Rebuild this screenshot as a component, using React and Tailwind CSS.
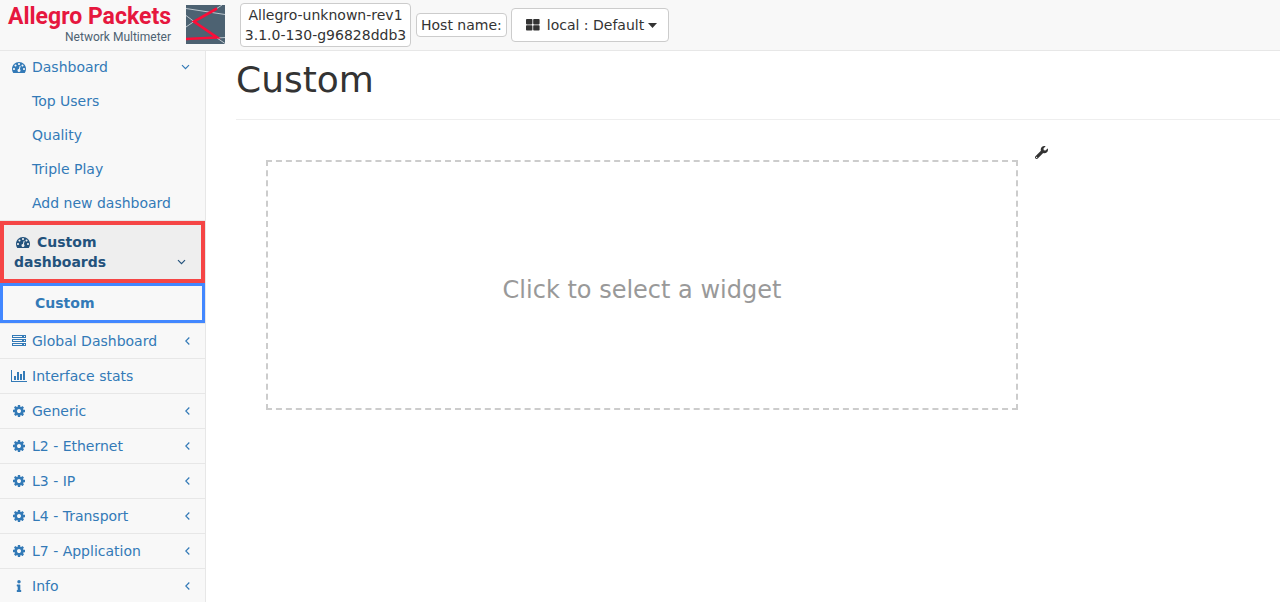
import React, { useState } from 'react';
import { FaInfo, FaWrench } from 'react-icons/fa';

const ServerIcon = () => (
  <svg width="14" height="12" viewBox="0 0 14 12" fill="currentColor">
    <path
      fillRule="evenodd"
      d="M0 0h14v3H0zM1 1v1h9V1zM12 1v1h1V1zM0 4h14v3H0zM1 5v1h9V5zM12 5v1h1V5zM0 8h14v3H0zM1 9v1h9V9zM12 9v1h1V9z"
    />
  </svg>
);

const BarChartIcon = () => (
  <svg width="16" height="12" viewBox="0 0 16 12" fill="currentColor">
    <path d="M0 0h1v11h15v1H0zM3 6h2v4H3zM6 2h2v8H6zM9 4h2v6H9zM12 1h2v9h-2z" />
  </svg>
);

const GaugeIcon = ({ className }) => (
  <svg width="14" height="14" viewBox="0 0 1792 1792" fill="currentColor" className={className}>
    <path d="M384 1152q0-53-37.500-90.500t-90.500-37.500-90.500 37.500-37.500 90.500 37.500 90.500 90.500 37.500 90.500-37.500 37.500-90.500zm192-448q0-53-37.500-90.500t-90.500-37.500-90.500 37.500-37.500 90.500 37.500 90.500 90.500 37.500 90.500-37.500 37.500-90.500zm428 481l101-382q6-26-7.500-48.500t-38.500-29.500-48 6.500-30 39.500l-101 382q-60 5-107 43.500t-63 98.500q-20 77 20 146t117 89 146-20 89-117q16-60-6-117t-72-91zm660-33q0-53-37.500-90.500t-90.500-37.500-90.500 37.500-37.500 90.500 37.500 90.500 90.500 37.500 90.500-37.500 37.500-90.500zm-640-640q0-53-37.500-90.500t-90.500-37.500-90.500 37.500-37.500 90.500 37.500 90.500 90.500 37.500 90.500-37.500 37.500-90.500zm448 192q0-53-37.500-90.500t-90.500-37.500-90.500 37.500-37.500 90.500 37.500 90.500 90.500 37.500 90.500-37.500 37.500-90.500zm320 448q0 261-141 483-19 29-54 29h-1402q-35 0-54-29-141-221-141-483 0-182 71-348t191-286 286-191 348-71 348 71 286 191 191 286 71 348z" />
  </svg>
);

const CogIcon = () => (
  <svg width="14" height="14" viewBox="0 0 1792 1792" fill="currentColor">
    <path d="M1152 896q0-106-75-181t-181-75-181 75-75 181 75 181 181 75 181-75 75-181zm512-109v222q0 12-8 23t-20 13l-185 28q-19 54-39 91 35 50 107 138 10 12 10 25t-9 23q-27 37-99 108t-94 71q-12 0-26-9l-138-108q-44 23-91 38-16 136-29 186-7 28-36 28h-222q-14 0-24.500-8.500t-11.500-21.500l-28-184q-49-16-90-37l-141 107q-10 9-25 9-14 0-25-11-126-114-165-168-7-10-7-23 0-12 8-23 15-21 51-66.500t54-70.500q-27-50-41-99l-183-27q-13-2-21-12.500t-8-23.500v-222q0-12 8-23t19-13l186-28q14-46 39-92-40-57-107-138-10-12-10-24 0-10 9-23 26-36 98.500-107.500t94.500-71.500q13 0 26 10l138 107q44-23 91-38 16-136 29-186 7-28 36-28h222q14 0 24.500 8.500t11.500 21.500l28 184q49 16 90 37l142-107q9-9 24-9 13 0 25 10 129 119 165 170 7 8 7 22 0 12-8 23-15 21-51 66.500t-54 70.500q26 50 41 98l183 28q13 2 21 12.500t8 23.500z" />
  </svg>
);

const AngleDown = ({ className }) => (
  <svg width="9" height="6" viewBox="0 0 9 6" fill="none" stroke="currentColor" strokeWidth="1.2" className={className}>
    <path d="M1 1.200L4.500 4.700L8 1.200" />
  </svg>
);

const AngleLeft = () => (
  <svg width="5" height="8" viewBox="0 0 5 8" fill="none" stroke="currentColor" strokeWidth="1.2">
    <path d="M4.300 0.500L0.800 4L4.300 7.500" />
  </svg>
);

const Caret = () => (
  <svg width="9" height="5" viewBox="0 0 9 5" fill="currentColor">
    <path d="M0 0h9L4.500 5z" />
  </svg>
);

const WindowsIcon = () => (
  <svg width="14" height="12" viewBox="0 0 14 12" fill="currentColor">
    <rect x="0" y="0" width="6.400" height="5.400" rx="0.800" />
    <rect x="7.200" y="0" width="6.400" height="5.400" rx="0.800" />
    <rect x="0" y="6.200" width="6.400" height="5.400" rx="0.800" />
    <rect x="7.200" y="6.200" width="6.400" height="5.400" rx="0.800" />
  </svg>
);

const LogoMark = () => (
  <svg width="39" height="39" viewBox="0 0 39 39" className="mb-[2px] shrink-0">
    <rect width="39" height="39" fill="#4d6272" />
    <g stroke="#bcc6cd" strokeWidth="1" fill="none">
      <path d="M0 3.500L39 9.500M0 10.500L8 16.500L0 22M30 4L36 0M31 33L39 32.500M31 33L39 38.500" />
    </g>
    <path d="M31 3.500L8 16.500L31 32.500L0 34" stroke="#fb0d38" strokeWidth="2.600" fill="none" />
  </svg>
);

const dashboards = ['Top Users', 'Quality', 'Triple Play', 'Add new dashboard'];

const menuItems = [
  { label: 'Global Dashboard', icon: <ServerIcon />, expandable: true },
  { label: 'Interface stats', icon: <BarChartIcon />, expandable: false },
  { label: 'Generic', icon: <CogIcon />, expandable: true },
  { label: 'L2 - Ethernet', icon: <CogIcon />, expandable: true },
  { label: 'L3 - IP', icon: <CogIcon />, expandable: true },
  { label: 'L4 - Transport', icon: <CogIcon />, expandable: true },
  { label: 'L7 - Application', icon: <CogIcon />, expandable: true },
  { label: 'Info', icon: <FaInfo size={12} />, expandable: true },
];

const Header = () => (
  <header className="flex h-[51px] items-center border-b border-[#e7e7e7] bg-[#f8f8f8]">
    <a href="#home" className="flex w-[240px] shrink-0 items-center gap-[15px] pl-1">
      <span className="flex w-[167px] flex-col items-end pb-[3px] whitespace-nowrap">
        <span className="font-[Roboto] text-[23px] leading-[27px] font-bold text-[#e6173e]">Allegro Packets</span>
        <span className="font-[Roboto] text-[12px] leading-[14px] text-[#4d6272]">Network Multimeter</span>
      </span>
      <LogoMark />
    </a>
    <div className="w-[171px] shrink-0 rounded border border-[#ccc] bg-white px-[3px] py-px text-center break-all">
      Allegro-unknown-rev13.1.0-130-g96828ddb3
    </div>
    <div className="ml-[5px] shrink-0 rounded border border-[#ccc] bg-white px-1 py-px">Host name:</div>
    <button className="ml-1 flex h-[34px] shrink-0 items-center rounded border border-[#ccc] bg-white pr-[11px] pl-[14px]">
      <WindowsIcon />
      <span className="mr-1 ml-[7px]">local : Default</span>
      <Caret />
    </button>
  </header>
);

const Sidebar = ({ open, onToggle }) => (
  <nav className="w-[206px] shrink-0 border-r border-[#e7e7e7] bg-[#f8f8f8] text-[#337ab7]">
    <ul>
      <li className="border-b border-[#e7e7e7]">
        <button onClick={onToggle} className="flex h-[33px] w-full items-center pr-[15px] pb-px pl-[11px] text-left">
          <span className="flex w-4 justify-center">
            <GaugeIcon />
          </span>
          <span className="ml-[5px] flex-1">Dashboard</span>
          <AngleDown />
        </button>
        {open && (
          <ul>
            {dashboards.map((name) => (
              <li key={name}>
                <a href="#dashboard" className="flex h-[34px] items-center pl-8">
                  {name}
                </a>
              </li>
            ))}
          </ul>
        )}
      </li>
      <li className="border-b border-[#e7e7e7]">
        <button className="flex w-[205px] items-end justify-between border-4 border-[#f54545] bg-[#eee] py-[7px] pr-[15px] pl-[10px] text-left font-bold text-[#23527c]">
          <span>
            <GaugeIcon className="mr-[7px] ml-[2px] inline align-[-2px]" />
            Custom dashboards
          </span>
          <AngleDown className="mb-[7px] shrink-0" />
        </button>
        <a href="#custom" className="flex h-10 items-center border-[3px] border-[#4287ff] pl-8 font-bold">
          Custom
        </a>
      </li>
      {menuItems.map((item) => (
        <li key={item.label} className="border-b border-[#e7e7e7]">
          <a href="#menu" className="flex h-[34px] items-center pr-[15px] pl-[11px]">
            <span className="flex w-4 justify-center">{item.icon}</span>
            <span className="ml-[5px] flex-1">{item.label}</span>
            {item.expandable && <AngleLeft />}
          </a>
        </li>
      ))}
    </ul>
  </nav>
);

const App = () => {
  const [open, setOpen] = useState(true);

  return (
    <div className="flex h-screen flex-col overflow-hidden bg-white font-['DejaVu_Sans',sans-serif] text-[14px] leading-[20px] text-[#333]">
      <Header />
      <div className="flex min-h-0 flex-1">
        <Sidebar open={open} onToggle={() => setOpen(!open)} />
        <main className="min-w-0 flex-1 pl-[30px]">
          <h1 className="border-b border-[#eee] pt-[9px] pb-5 text-[36px] leading-[39px]">Custom</h1>
          <div className="mt-[26px] flex items-start pl-[30px]">
            <button className="mt-[14px] h-[250px] w-[752px] max-w-[80%] border-2 border-dashed border-[#ccc] pt-[10px] text-[24px] text-[#999]">
              Click to select a widget
            </button>
            <button className="ml-[17px]" aria-label="Configure widget">
              <FaWrench size={13} />
            </button>
          </div>
        </main>
      </div>
    </div>
  );
};

export default App;
